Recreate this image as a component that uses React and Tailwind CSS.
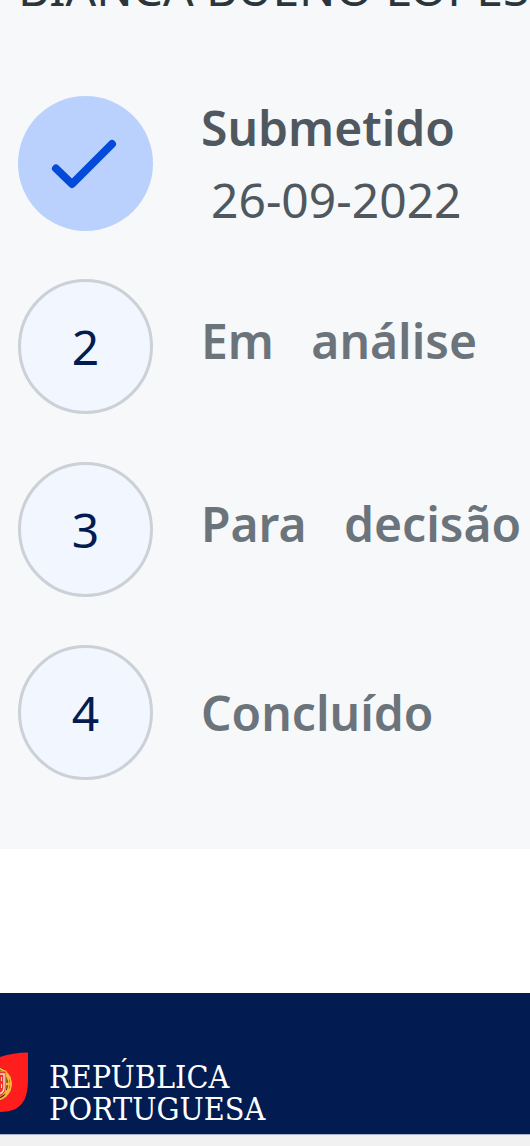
const steps = [
  { id: 1, label: 'Submetido', date: '26-09-2022', done: true },
  { id: 2, label: 'Em\u00a0\u00a0 análise' },
  { id: 3, label: 'Para\u00a0\u00a0 decisão' },
  { id: 4, label: 'Concluído', last: true },
]

function StepMarker({ step }) {
  if (step.done) {
    return (
      <div className="w-[135px] h-[135px] rounded-full bg-[#bad0fd] flex items-center justify-center flex-shrink-0">
        <svg className="w-[72px] h-[72px]" viewBox="0 0 72 72" fill="none" role="img" aria-label="Etapa concluída">
          <path d="M6 40.5 22 56 62 16" stroke="#034ad8" strokeWidth="8" strokeLinecap="round" strokeLinejoin="round" />
        </svg>
      </div>
    )
  }

  return (
    <div className="w-[135px] h-[135px] rounded-full border-3 border-[#cbd1d7] bg-[#f1f6ff] text-[#021c51] flex items-center justify-center flex-shrink-0">
      {step.id}
    </div>
  )
}

function Step({ step }) {
  const color = step.done ? 'text-[#50585f]' : 'text-[#6b737b]'
  const spacing = step.done || step.last ? '' : 'pb-3'

  return (
    <li className="flex items-center gap-12">
      <StepMarker step={step} />
      {/* negative margin lets the two-line label be taller than the marker */}
      <div className={`-my-2 whitespace-nowrap ${color} ${spacing}`}>
        <p className="font-semibold">{step.label}</p>
        {step.date && <p className="pl-[10px]">{step.date}</p>}
      </div>
    </li>
  )
}

/* Right-hand part of the flag, the rest runs off the page edge */
function Flag() {
  return (
    <svg className="w-7 h-[60px] flex-shrink-0" viewBox="0 0 28 60" role="img" aria-label="Bandeira de Portugal">
      <path d="M0 5C9 2 18 .5 28 .5V28c0 17-5 26-15 30-4 1-8 2-13 2Z" fill="#ff1d1d" />
      <circle cx="-5" cy="32" r="17" fill="#2a1a10" />
      <g fill="none" stroke="#f9b53c" strokeWidth="2">
        <circle cx="-5" cy="32" r="16" />
        <path d="M5 19C10 27 10 37 5 45" />
        <path d="M0 22c4 0 7 1 10 4M0 32h12M0 42c4 0 7-2 10-5" strokeWidth="2.5" />
      </g>
      <path d="M-8 19H6V35c0 6-3 9-8 10Z" fill="#e8352c" stroke="#f9b53c" />
      <path d="M-1 22H4V35c0 4-1 6-5 7" fill="none" stroke="#ffd9c8" strokeWidth="1.5" />
      <path d="M1.500 25v4M1.500 32v4" stroke="#ffd9c8" />
    </svg>
  )
}

export default function App() {
  return (
    <div className="min-h-screen overflow-hidden bg-white font-['Noto_Sans',sans-serif] text-5xl leading-[72px]">
      <main className="-mt-12 bg-[#f6f8fa] px-[18px] pb-[69px]">
        <h1 className="whitespace-nowrap text-[#2b363c]">BIANCA BUENO LOPES</h1>
        <ol className="mt-[72px] flex flex-col gap-12">
          {steps.map((step) => (
            <Step key={step.id} step={step} />
          ))}
        </ol>
      </main>

      <footer className="mt-36 bg-[#021c51] pt-[59px] pb-[9px] flex gap-[21px]">
        <Flag />
        <p className="pt-[9px] font-['DejaVu_Serif_Condensed','DejaVu_Serif',serif] text-[32px] leading-8 text-white">
          REPÚBLICA
          <br />
          PORTUGUESA
        </p>
      </footer>
      <div className="h-3 border-t border-[#aab4cc] bg-[#f1f1f1]" />
    </div>
  )
}
